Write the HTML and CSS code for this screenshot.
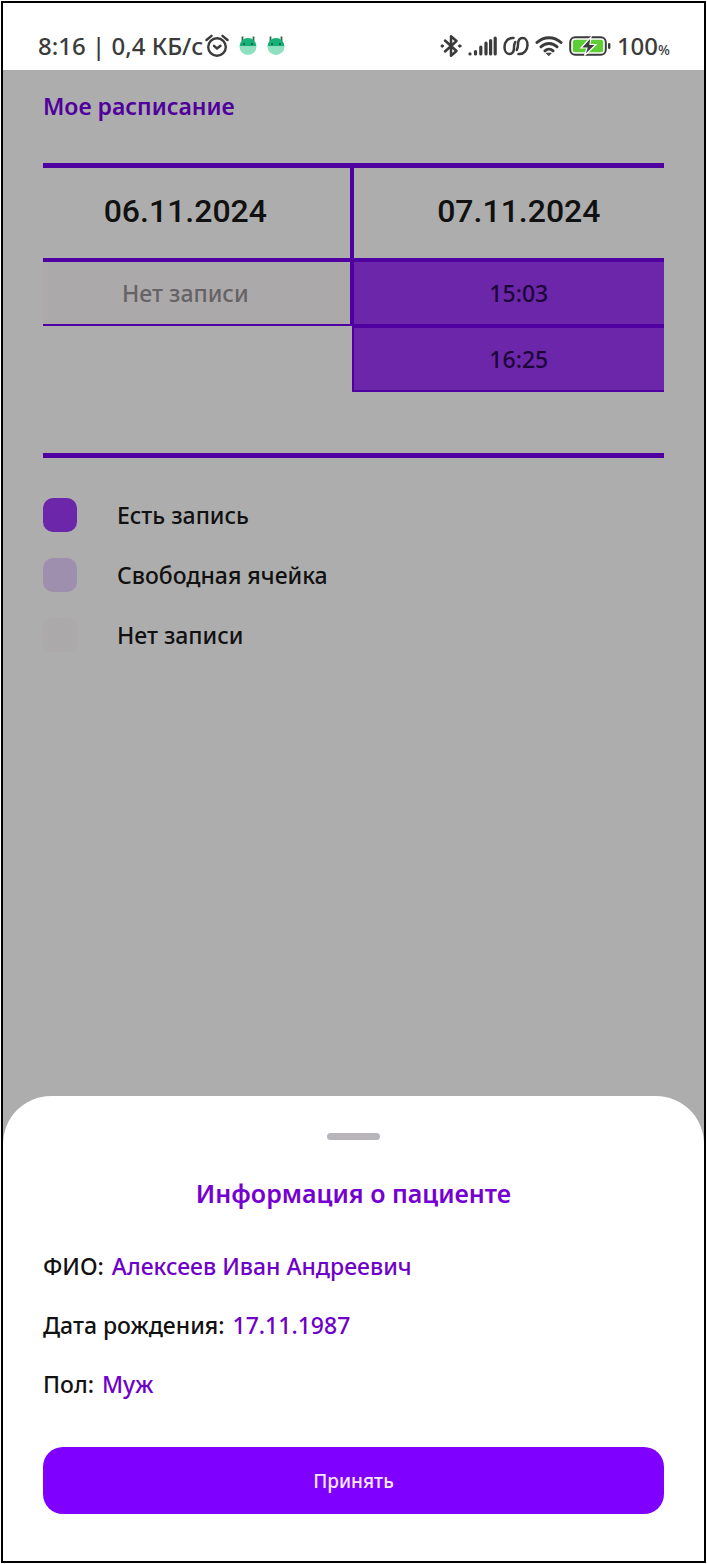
FILE: index.html
```html
<!DOCTYPE html>
<html lang="ru">
<head>
<meta charset="utf-8">
<meta name="viewport" content="width=device-width, initial-scale=1">
<title>Мое расписание</title>
<link rel="stylesheet" href="styles.css">
</head>
<body>
<div class="phone">
  <header class="status">
    <div class="status-left">
      <span>8:16 | 0,4 КБ/с</span>
      <svg class="alarm" width="24" height="24" viewBox="0 0 24 24" fill="none" stroke="#3b3b3b" stroke-linecap="round" stroke-linejoin="round">
        <circle cx="12" cy="13" r="8.800" stroke-width="2.400"/>
        <path d="M1.500 6L6.500 1.800M22.500 6L17.500 1.800" stroke-width="2.400"/>
        <path d="M9 11.800l3 2.700 3.500-2.700" stroke-width="2.400"/>
      </svg>
      <svg class="droid" width="18" height="20" viewBox="0 0 18 20">
        <path d="M3.500 0.500v5M14.500 0.500v5" stroke="#2c6b53" stroke-width="1.800"/>
        <path d="M0.500 10.500a8.500 8.500 0 0 1 17 0z" fill="#17b077"/>
        <path d="M0.500 10.500a8.500 8.500 0 0 0 17 0z" fill="#8fe0bf"/>
        <circle cx="5" cy="8" r="1" fill="#154f3a"/><circle cx="13" cy="8" r="1" fill="#154f3a"/>
      </svg>
      <svg class="droid" width="18" height="20" viewBox="0 0 18 20">
        <path d="M3.500 0.500v5M14.500 0.500v5" stroke="#2c6b53" stroke-width="1.800"/>
        <path d="M0.500 10.500a8.500 8.500 0 0 1 17 0z" fill="#17b077"/>
        <path d="M0.500 10.500a8.500 8.500 0 0 0 17 0z" fill="#8fe0bf"/>
        <circle cx="5" cy="8" r="1" fill="#154f3a"/><circle cx="13" cy="8" r="1" fill="#154f3a"/>
      </svg>
    </div>
    <div class="status-right">
      <svg width="22" height="24" viewBox="0 0 22 24" fill="none" stroke="#3b3b3b" stroke-width="2.500" stroke-linejoin="round" stroke-linecap="round">
        <path d="M5 6.500L16.500 17 11 21.800V2.200L16.500 7 5 17.500"/>
        <circle cx="2.200" cy="12" r="1.200" fill="#3b3b3b" stroke-width="1"/><circle cx="19.800" cy="12" r="1.200" fill="#3b3b3b" stroke-width="1"/>
      </svg>
      <svg width="29" height="20" viewBox="0 0 29 20" stroke="#3b3b3b" stroke-width="3.200" stroke-linecap="round">
        <path d="M2 17.800v.2M7.500 15.500v2.500M12.800 11v7M18 7v11M22.600 4.500v13.500M27.200 2v16"/>
      </svg>
      <svg width="26" height="20" viewBox="0 0 26 20" fill="none" stroke="#3b3b3b" stroke-width="2.500" stroke-linecap="round">
        <path d="M10.500 2C5 1.500 1.500 6 1.500 11c0 4.300 2.200 7 4.800 7 3.200 0 4.700-3 4.700-6.500 0-2.500.3-4 1.300-5.500"/>
        <path d="M15.500 18c5.500.5 9-4 9-9 0-4.300-2.200-7-4.800-7-3.200 0-4.700 3-4.700 6.500 0 2.500-.3 4-1.300 5.500"/>
      </svg>
      <svg width="28" height="22" viewBox="0 0 28 22" fill="none" stroke="#3b3b3b" stroke-width="3" stroke-linecap="round">
        <path d="M2 7.500c7-6.500 17-6.500 24 0M6 11.800c4.500-4.500 11.500-4.500 16 0M10 15.800c2.200-2 5.800-2 8 0"/>
        <path d="M11.800 18.200h4.400L14 20.500z" fill="#3b3b3b" stroke-width="1" stroke-linejoin="round"/>
      </svg>
      <svg width="42" height="20" viewBox="0 0 42 20">
        <rect x="1.200" y="1.200" width="35.600" height="17.600" rx="5" fill="#fff" stroke="#3b3b3b" stroke-width="2"/>
        <rect x="3.800" y="3.800" width="30.400" height="12.400" rx="2.500" fill="#5fce36"/>
        <path d="M22 1L12 12h6l-2.500 7.500L27 8.500h-6z" fill="#3b3b3b" stroke="#fff" stroke-width="1.200"/>
        <rect x="39" y="7" width="2.400" height="6" rx="1.200" fill="#3b3b3b"/>
      </svg>
      <span>100<small>%</small></span>
    </div>
  </header>

  <main class="schedule">
    <h1 class="title">Мое расписание</h1>
    <div class="board">
      <table class="days">
        <colgroup><col class="day-first"><col></colgroup>
        <thead>
          <tr><th scope="col">06.11.2024</th><th scope="col">07.11.2024</th></tr>
        </thead>
        <tbody>
          <tr><td class="none">Нет записи</td><td class="booked"><button type="button" class="slot">15:03</button></td></tr>
          <tr><td class="blank"></td><td class="booked"><button type="button" class="slot">16:25</button></td></tr>
        </tbody>
      </table>
    </div>
    <ul class="legend">
      <li><span class="swatch swatch-booked"></span>Есть запись</li>
      <li><span class="swatch swatch-free"></span>Свободная ячейка</li>
      <li><span class="swatch swatch-none"></span>Нет записи</li>
    </ul>
  </main>

  <section class="sheet" aria-labelledby="patient">
    <div class="handle"></div>
    <h2 class="sheet-title" id="patient">Информация о пациенте</h2>
    <dl class="facts">
      <div><dt>ФИО:</dt><dd>Алексеев Иван Андреевич</dd></div>
      <div><dt>Дата рождения:</dt><dd>17.11.1987</dd></div>
      <div><dt>Пол:</dt><dd>Муж</dd></div>
    </dl>
    <button type="button" class="accept">Принять</button>
  </section>
</div>
</body>
</html>
```
FILE: styles.css
```css
* {
  box-sizing: border-box;
}

body {
  margin: 0;
  padding: 1px;
  background: #fff;
  color: #111;
  font-family: "Noto Sans", "Open Sans", sans-serif;
  font-size: 23px;
  font-weight: 500;
  line-height: 32px;
}

h1, h2, ul, dl, dd {
  margin: 0;
  padding: 0;
}

button {
  font: inherit;
  cursor: pointer;
}

.phone {
  display: flex;
  flex-direction: column;
  min-height: calc(100vh - 2px);
  border: 2px solid #000;
  background: #adadad;
}

.status {
  display: flex;
  justify-content: space-between;
  align-items: center;
  padding: 22px 34px 4px 35px;
  min-height: 67px;
  background: #fff;
  color: #3b3b3b;
  font-size: 24px;
}

.status-left,
.status-right {
  display: flex;
  align-items: center;
  gap: 6px;
}

.status-left {
  gap: 2px;
}

.droid {
  margin-left: 8px;
}

.status small {
  font-size: 14px;
  line-height: 1;
}

.schedule {
  flex: 1;
  padding: 20px 40px;
}

.title {
  color: #50009c;
  font-size: 23px;
  font-weight: 600;
}

.board {
  margin-top: 41px;
  padding-bottom: 61px;
  border-top: 5px solid #5000a0;
  border-bottom: 5px solid #5000a0;
}

.days {
  width: 100%;
  table-layout: fixed;
  border-spacing: 0;
  text-align: center;
}

.day-first {
  width: 49.7%;
}

.days th,
.days td {
  padding: 0;
}

.days th {
  height: 94px;
  padding-bottom: 4px;
  border-bottom: 4px solid #5000a0;
  font-family: Roboto, "Noto Sans", sans-serif;
  font-size: 32px;
  font-weight: 500;
}

.days th:first-child,
.days .none {
  padding-right: 22px;
  border-right: 2px solid #5000a0;
}

.days th:last-child,
.days .booked {
  padding-left: 20px;
  border-left: 2px solid #5000a0;
}

.days .none {
  border-bottom: 2px solid #5000a0;
  background: #aca9aa;
  color: #656365;
}

.days .booked {
  border-bottom: 2px solid #5000a0;
  background: #6b26aa;
}

.days tr + tr .booked {
  border-top: 2px solid #5000a0;
}

.slot {
  display: block;
  width: 100%;
  height: 62px;
  padding: 0;
  border: 0;
  background: none;
  color: #1c0638;
}

.legend {
  display: grid;
  gap: 26px;
  margin-top: 40px;
  list-style: none;
}

.legend li {
  display: flex;
  align-items: center;
  gap: 40px;
}

.swatch {
  width: 34px;
  height: 34px;
  border-radius: 10px;
}

.swatch-booked {
  background: #6b26aa;
}

.swatch-free {
  background: #9f8fae;
}

.swatch-none {
  background: #aca9aa;
}

.sheet {
  padding: 37px 40px 47px;
  border-radius: 48px 48px 0 0;
  background: #fff;
}

.handle {
  width: 53px;
  height: 7px;
  margin: 0 auto;
  border-radius: 4px;
  background: #b7b5ba;
}

.sheet-title {
  margin-top: 37px;
  color: #7500d1;
  font-size: 25px;
  font-weight: 600;
  text-align: center;
}

.facts {
  display: grid;
  gap: 27px;
  margin-top: 41px;
}

.facts div {
  display: flex;
  gap: 8px;
}

.facts dd {
  color: #6f00c8;
}

.accept {
  display: block;
  width: 100%;
  height: 67px;
  margin-top: 47px;
  border: 0;
  border-radius: 20px;
  background: #8000ff;
  color: #fce8ff;
  font-size: 19px;
}
```
